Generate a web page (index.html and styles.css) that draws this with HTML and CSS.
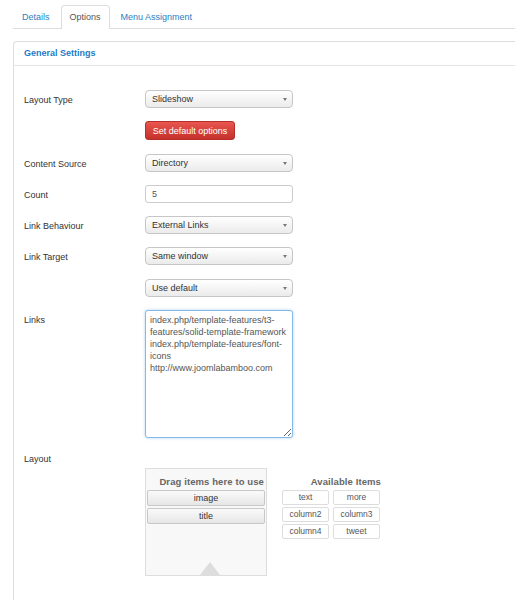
FILE: index.html
```html
<!DOCTYPE html>
<html lang="en">
<head>
    <meta charset="UTF-8">
    <meta name="viewport" content="width=device-width, initial-scale=1.0">
    <title>Module Options</title>
    <link rel="stylesheet" href="styles.css">
</head>
<body>

    <div class="page">
        <ul class="tabs">
            <li><a href="#">Details</a></li>
            <li class="active"><a href="#">Options</a></li>
            <li><a href="#">Menu Assignment</a></li>
        </ul>

        <div class="panel">
            <div class="panel-heading">General Settings</div>

            <div class="panel-body">
                <div class="row">
                    <label for="layoutType">Layout Type</label>
                    <div class="select-wrap">
                        <select id="layoutType">
                            <option>Slideshow</option>
                        </select>
                    </div>
                </div>

                <div class="row">
                    <span class="spacer"></span>
                    <button class="btn-danger">Set default options</button>
                </div>

                <div class="row">
                    <label for="contentSource">Content Source</label>
                    <div class="select-wrap">
                        <select id="contentSource">
                            <option>Directory</option>
                        </select>
                    </div>
                </div>

                <div class="row">
                    <label for="count">Count</label>
                    <input type="text" id="count" value="5">
                </div>

                <div class="row">
                    <label for="linkBehaviour">Link Behaviour</label>
                    <div class="select-wrap">
                        <select id="linkBehaviour">
                            <option>External Links</option>
                        </select>
                    </div>
                </div>

                <div class="row">
                    <label for="linkTarget">Link Target</label>
                    <div class="select-wrap">
                        <select id="linkTarget">
                            <option>Same window</option>
                        </select>
                    </div>
                </div>

                <div class="row">
                    <span class="spacer"></span>
                    <div class="select-wrap">
                        <select>
                            <option>Use default</option>
                        </select>
                    </div>
                </div>

                <div class="row">
                    <label for="links">Links</label>
                    <textarea id="links">index.php/template-features/t3-features/solid-template-framework
index.php/template-features/font-icons
http://www.joomlabamboo.com</textarea>
                </div>

                <div class="layout-row">
                    <label>Layout</label>
                    <div class="layout-widget">
                        <div class="drop-box">
                            <div class="box-title">Drag items here to use</div>
                            <div class="used-item">image</div>
                            <div class="used-item">title</div>
                            <span class="arrow-up"></span>
                        </div>
                        <div class="available">
                            <div class="box-title">Available Items</div>
                            <div class="item-grid">
                                <span>text</span>
                                <span>more</span>
                                <span>column2</span>
                                <span>column3</span>
                                <span>column4</span>
                                <span>tweet</span>
                            </div>
                        </div>
                    </div>
                </div>
            </div>
        </div>
    </div>

</body>
</html>
```

FILE: styles.css
```css
/* General styles */
body {
    margin: 0;
    font-family: "Liberation Sans", Arial, sans-serif;
    font-size: 9px;
    color: #333333;
    background-color: #ffffff;
    overflow: hidden;
}
.page {
    padding: 5px 0 0 13px;
}

/* Tabs */
.tabs {
    list-style: none;
    margin: 0;
    padding: 0;
    display: flex;
    border-bottom: 1px solid #dddddd;
}
.tabs li {
    margin-right: 2px;
    margin-bottom: -1px;
}
.tabs a {
    display: block;
    padding: 0 8px;
    line-height: 23px;
    border: 1px solid transparent;
    border-bottom: none;
    border-radius: 4px 4px 0 0;
    color: #2a80c4;
    text-decoration: none;
}
.tabs .active a {
    color: #555555;
    background-color: #ffffff;
    border-color: #dddddd;
}

/* Panel */
.panel {
    margin-top: 12px;
    border: 1px solid #dddddd;
    border-right: none;
    border-bottom: none;
    border-radius: 4px 0 0 0;
    height: 559px;
}
.panel-heading {
    padding: 0 10px;
    line-height: 23px;
    font-weight: bold;
    color: #1d7bc6;
    border-bottom: 1px solid #e5e5e5;
}
.panel-body {
    padding: 24px 10px 0;
}

/* Form rows */
.row {
    display: flex;
    align-items: flex-start;
    margin-bottom: 13.3px;
}
.row label, .row .spacer {
    flex: 0 0 121px;
    line-height: 16px;
    padding-top: 2px;
}
.select-wrap {
    position: relative;
    width: 148px;
    height: 18px;
}
.select-wrap select {
    appearance: none;
    -webkit-appearance: none;
    display: block;
    box-sizing: border-box;
    width: 148px;
    height: 18px;
    margin: 0;
    padding: 0 0 0 6px;
    border: 1px solid #c6c6c6;
    border-radius: 4px;
    background: linear-gradient(#ffffff, #ebebeb);
    font-family: inherit;
    font-size: 9px;
    color: #333333;
    outline: none;
}
.select-wrap::after {
    content: "";
    position: absolute;
    right: 6px;
    top: 8px;
    border-left: 2.5px solid transparent;
    border-right: 2.5px solid transparent;
    border-top: 3px solid #777777;
    pointer-events: none;
}
.btn-danger {
    display: block;
    width: 90px;
    height: 19px;
    margin: 0;
    padding: 0;
    border: 1px solid #b72f2a;
    border-radius: 3px;
    background: linear-gradient(#e8564f, #c5302b);
    color: #ffffff;
    font-family: inherit;
    font-size: 9px;
    cursor: pointer;
}
.row input[type="text"] {
    display: block;
    box-sizing: border-box;
    width: 148px;
    height: 18px;
    margin: 0;
    padding: 0 6px;
    border: 1px solid #cccccc;
    border-radius: 3px;
    font-family: inherit;
    font-size: 9px;
    color: #555555;
    outline: none;
}
.row textarea {
    display: block;
    box-sizing: border-box;
    width: 148px;
    height: 128px;
    margin: 0;
    padding: 3px 4px;
    border: 1px solid #86b9e6;
    border-radius: 3px;
    box-shadow: 0 0 3px rgba(82, 168, 236, 0.5);
    font-family: inherit;
    font-size: 9px;
    line-height: 12px;
    color: #555555;
    outline: none;
}

/* Layout builder */
.layout-row label {
    display: block;
    line-height: 17px;
}
.layout-widget {
    display: flex;
    align-items: flex-start;
    margin-left: 121px;
}
.drop-box {
    box-sizing: border-box;
    width: 122px;
    height: 108px;
    display: flex;
    flex-direction: column;
    background-color: #f8f8f8;
    border: 1px solid #dddddd;
}
.box-title {
    margin-top: 7px;
    line-height: 12px;
    font-size: 9.5px;
    font-weight: bold;
    color: #666666;
    text-align: right;
    padding-right: 2px;
    letter-spacing: 0.1px;
}
.used-item {
    margin: 2px 1px 0;
    height: 14px;
    line-height: 14px;
    text-align: center;
    border: 1px solid #c8c8c8;
    border-radius: 2px;
    background: linear-gradient(#fafafa, #e6e6e6);
    color: #333333;
}
.used-item:first-of-type {
    margin-top: 3px;
}
.arrow-up {
    margin-top: auto;
    align-self: center;
    margin-left: 8px;
    width: 0;
    height: 0;
    border-left: 10px solid transparent;
    border-right: 10px solid transparent;
    border-bottom: 13px solid #dddddd;
}
.available {
    margin-left: 15px;
    width: 99px;
}
.available .box-title {
    margin-top: 8px;
    padding-right: 0;
}
.item-grid {
    display: grid;
    grid-template-columns: 47px 47px;
    gap: 2px 4px;
    margin-top: 2px;
}
.item-grid span {
    box-sizing: border-box;
    height: 15px;
    line-height: 13px;
    text-align: center;
    border: 1px solid #dddddd;
    border-radius: 2px;
    background-color: #ffffff;
    color: #555555;
    font-size: 8.5px;
}
```
